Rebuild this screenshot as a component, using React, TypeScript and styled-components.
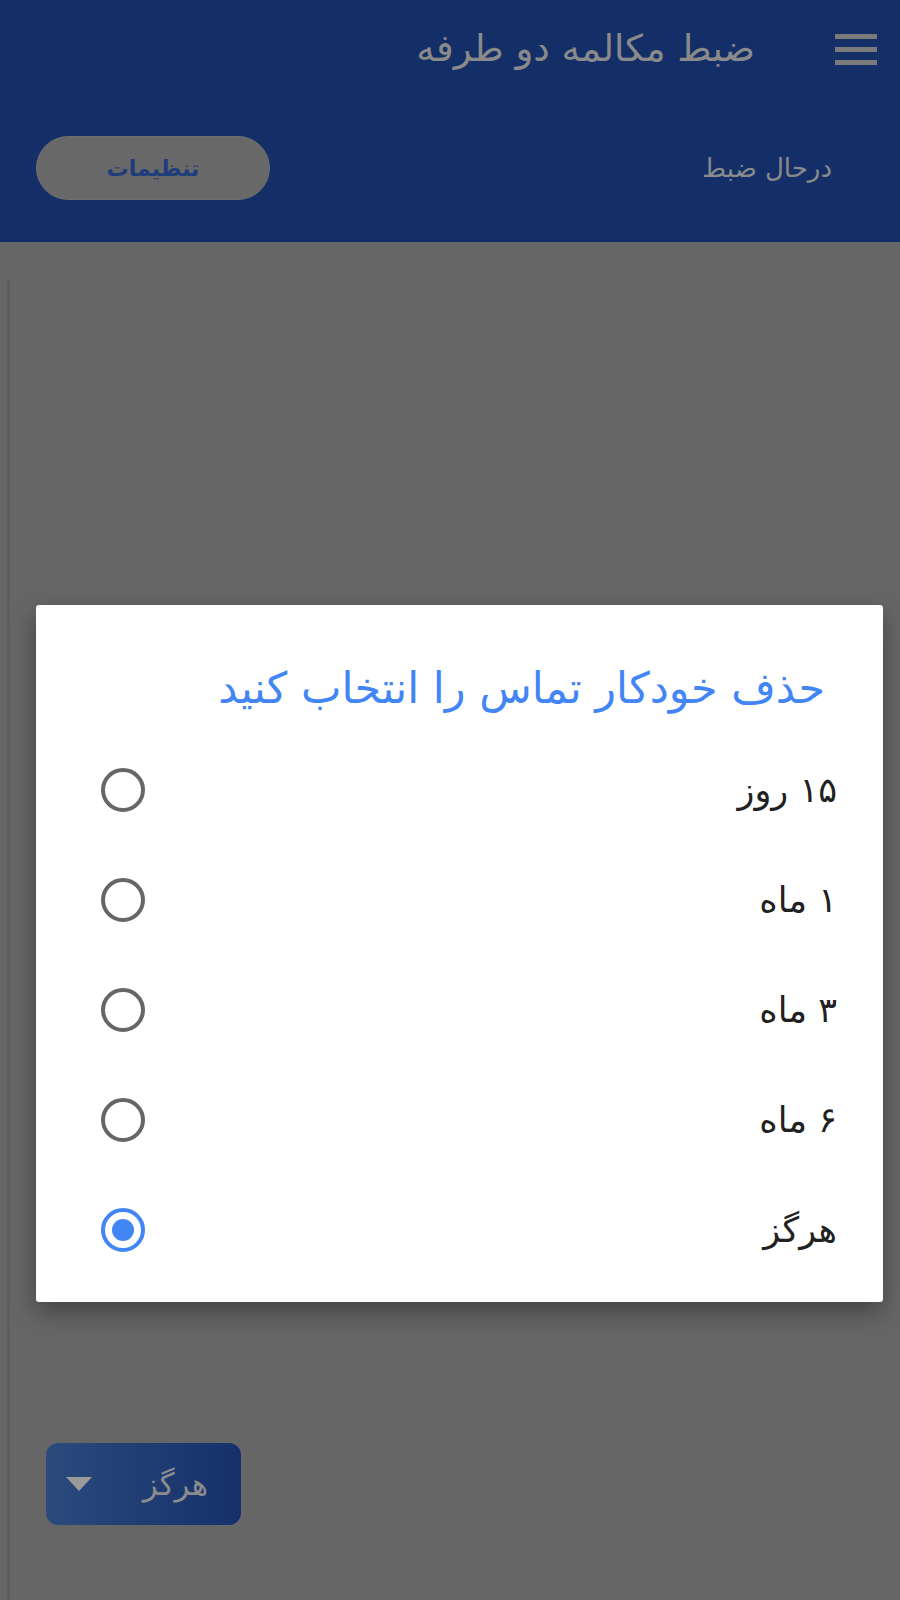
import React, { useState } from 'react';
import styled, { createGlobalStyle } from 'styled-components';

const GlobalStyle = createGlobalStyle`
  html, body {
    margin: 0;
    padding: 0;
    background: #666666;
  }
  * {
    box-sizing: border-box;
  }
  body {
    font-family: 'DejaVu Sans', 'Noto Sans', sans-serif;
  }
`;

const Page = styled.div`
  position: relative;
  min-height: 1600px;
  background: #666666;
  overflow: hidden;
`;

const Header = styled.header`
  height: 242px;
  background: #142f67;
  direction: rtl;
  display: flex;
  flex-direction: column;
`;

const TopBar = styled.div`
  height: 96px;
  display: flex;
  align-items: center;
  padding: 0 23px 0 0;
  gap: 80px;
`;

const MenuButton = styled.button`
  width: 42px;
  height: 31px;
  padding: 0;
  border: none;
  background: transparent;
  display: flex;
  flex-direction: column;
  justify-content: space-between;
  margin-top: 2px;
`;

const MenuBar = styled.span`
  display: block;
  height: 5px;
  width: 100%;
  background: #7a7a7a;
`;

const Title = styled.h1`
  margin: 0;
  font-size: 37px;
  font-weight: normal;
  color: #8a8a8a;
  line-height: 1;
`;

const TabRow = styled.div`
  display: flex;
  align-items: center;
  justify-content: space-between;
  padding: 40px 68px 0 36px;
`;

const StatusLabel = styled.span`
  font-size: 26px;
  color: #8a8a8a;
`;

const SettingsButton = styled.button`
  width: 234px;
  height: 64px;
  border-radius: 32px;
  border: 1px solid #6e6e6e;
  background: #686868;
  color: #1f3c7c;
  font-family: inherit;
  font-size: 22px;
  font-weight: bold;
`;

const Content = styled.main`
  margin: 37px 0 0 7px;
  border-left: 3px solid #5d5d5d;
  min-height: 1330px;
  padding: 1164px 0 0 36px;
`;

const Dropdown = styled.button`
  width: 195px;
  height: 82px;
  border: none;
  border-radius: 12px;
  background: linear-gradient(to right, #2b4a7c, #15306b);
  display: flex;
  align-items: center;
  justify-content: space-between;
  padding: 0 33px 0 20px;
  font-family: inherit;
  font-size: 31px;
  color: #8c8c8c;
`;

const Caret = styled.span`
  width: 0;
  height: 0;
  border-left: 13px solid transparent;
  border-right: 13px solid transparent;
  border-top: 14px solid #9a9a9a;
`;

const Dialog = styled.div`
  position: absolute;
  left: 36px;
  top: 605px;
  width: 847px;
  height: 697px;
  background: #ffffff;
  border-radius: 3px;
  box-shadow: 0 10px 24px rgba(0, 0, 0, 0.35);
  direction: rtl;
  padding: 48px 46px 17px 65px;
`;

const DialogTitle = styled.h2`
  margin: 0 12px 12px 0;
  height: 70px;
  display: flex;
  align-items: center;
  font-size: 43px;
  font-weight: normal;
  color: #4285f4;
  white-space: nowrap;
`;

const OptionList = styled.div`
  display: flex;
  flex-direction: column;
`;

const Option = styled.label`
  height: 110px;
  display: flex;
  align-items: center;
  justify-content: space-between;
  cursor: pointer;
`;

const OptionText = styled.span`
  font-size: 35px;
  color: #212121;
`;

const Radio = styled.span<{ $checked: boolean }>`
  width: 44px;
  height: 44px;
  border-radius: 50%;
  border: 4px solid ${(p) => (p.$checked ? '#4285f4' : '#666666')};
  display: flex;
  align-items: center;
  justify-content: center;

  &::after {
    content: '';
    width: 22px;
    height: 22px;
    border-radius: 50%;
    background: ${(p) => (p.$checked ? '#4285f4' : 'transparent')};
  }
`;

const options = ['۱۵ روز', '۱ ماه', '۳ ماه', '۶ ماه', 'هرگز'];

const App: React.FC = () => {
  const [selected, setSelected] = useState(4);

  return (
    <Page>
      <GlobalStyle />
      <Header>
        <TopBar>
          <MenuButton aria-label="menu">
            <MenuBar />
            <MenuBar />
            <MenuBar />
          </MenuButton>
          <Title>ضبط مکالمه دو طرفه</Title>
        </TopBar>
        <TabRow>
          <StatusLabel>درحال ضبط</StatusLabel>
          <SettingsButton>تنظیمات</SettingsButton>
        </TabRow>
      </Header>

      <Content>
        <Dropdown>
          <Caret />
          <span>هرگز</span>
        </Dropdown>
      </Content>

      <Dialog role="dialog">
        <DialogTitle>حذف خودکار تماس را انتخاب کنید</DialogTitle>
        <OptionList>
          {options.map((label, i) => (
            <Option key={label} onClick={() => setSelected(i)}>
              <OptionText>{label}</OptionText>
              <Radio $checked={selected === i} />
            </Option>
          ))}
        </OptionList>
      </Dialog>
    </Page>
  );
};

export default App;
